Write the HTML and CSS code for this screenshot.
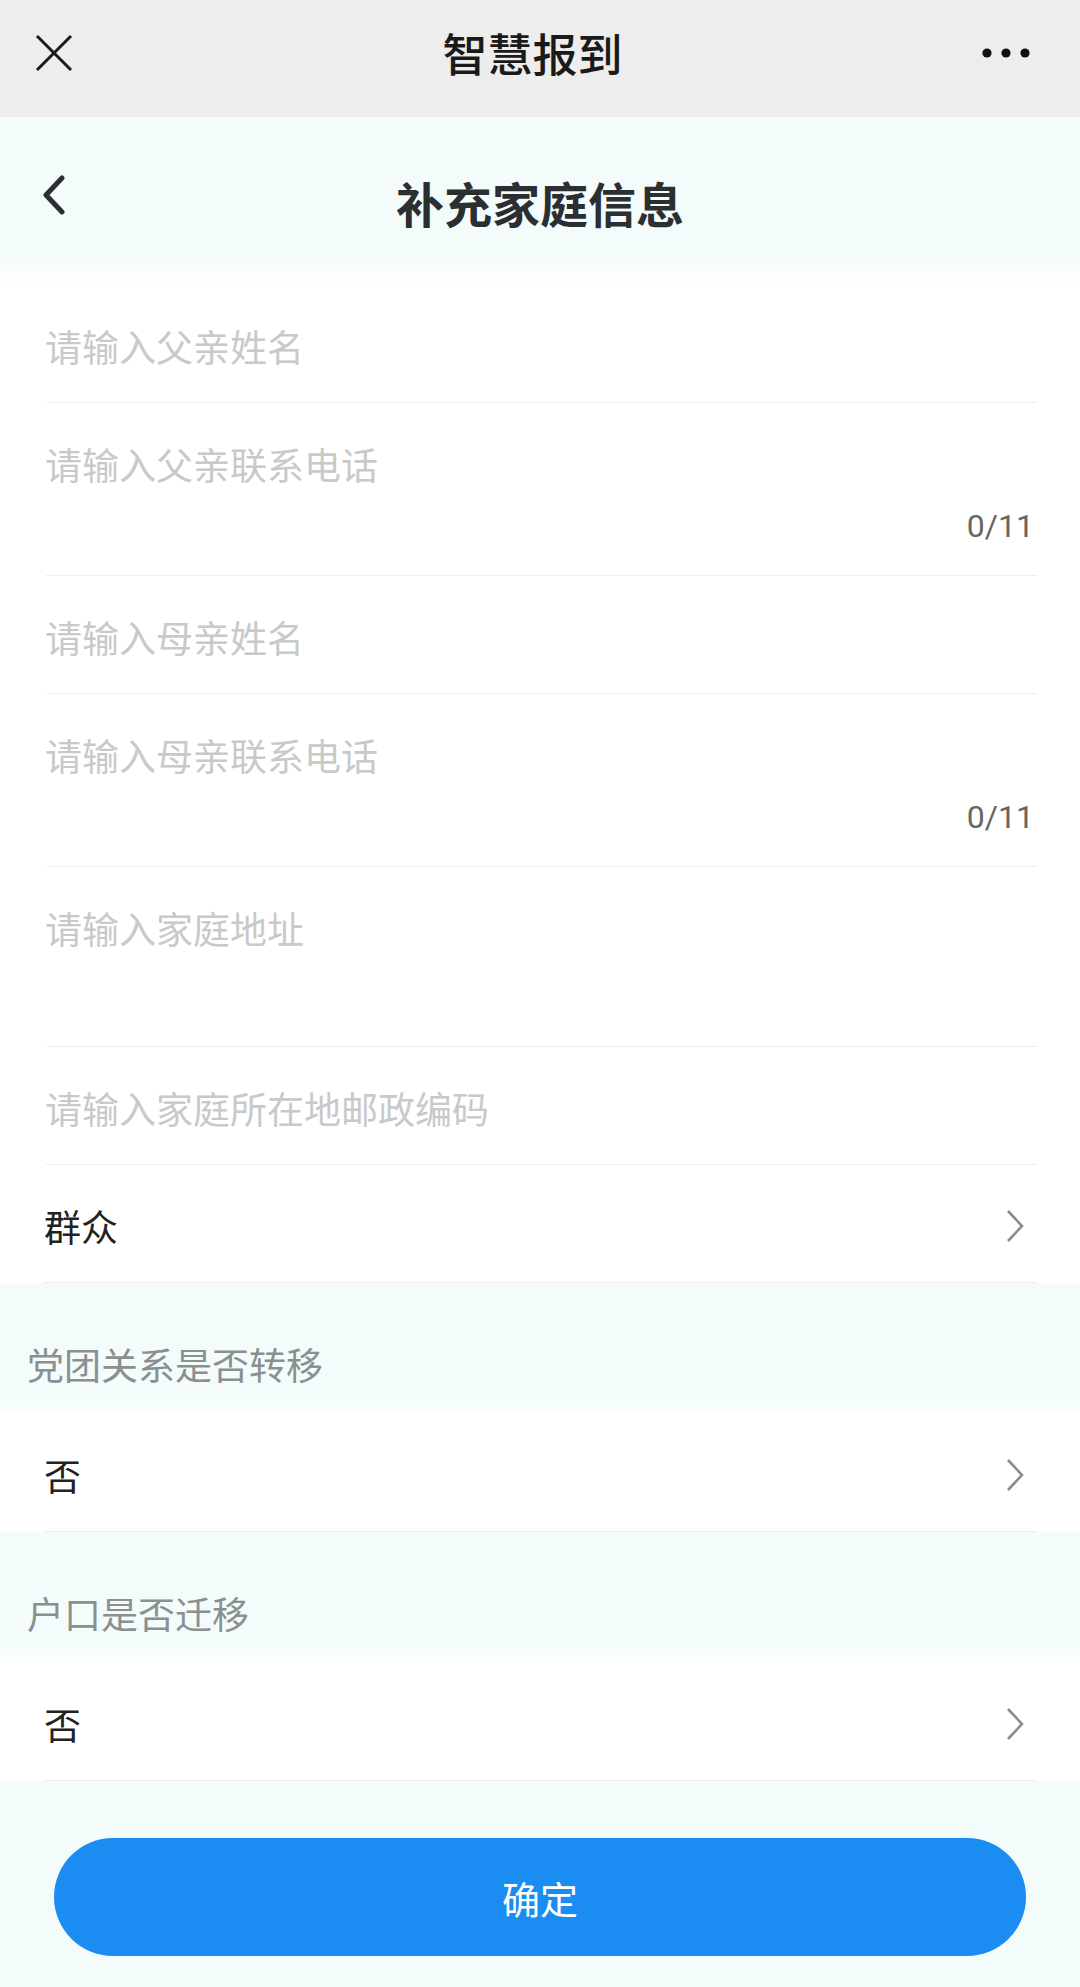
FILE: index.html
```html
<!DOCTYPE html>
<html lang="zh-CN">
<head>
    <meta charset="UTF-8">
    <meta name="viewport" content="width=device-width, initial-scale=1.0">
    <title>智慧报到</title>
    <link rel="stylesheet" href="styles.css">
</head>
<body>
    <div class="topbar">
        <svg class="icon-close" width="38" height="38" viewBox="0 0 38 38">
            <path d="M2 2 L36 36 M36 2 L2 36" stroke="#1a1a1a" stroke-width="3" fill="none"/>
        </svg>
        <div class="topbar-title">智慧报到</div>
        <svg class="icon-more" width="48" height="12" viewBox="0 0 48 12">
            <circle cx="5" cy="6" r="4.6" fill="#111"/>
            <circle cx="24" cy="6" r="4.6" fill="#111"/>
            <circle cx="43" cy="6" r="4.6" fill="#111"/>
        </svg>
    </div>

    <div class="header">
        <svg class="icon-back" width="24" height="40" viewBox="0 0 24 40">
            <path d="M20 3 L4 20 L20 37" stroke="#2b2f31" stroke-width="5" stroke-linecap="round" stroke-linejoin="round" fill="none"/>
        </svg>
        <h1>补充家庭信息</h1>
    </div>

    <div class="form">
        <div class="field">
            <div class="placeholder">请输入父亲姓名</div>
        </div>
        <div class="field">
            <div class="placeholder">请输入父亲联系电话</div>
            <div class="counter">0/11</div>
        </div>
        <div class="field">
            <div class="placeholder">请输入母亲姓名</div>
        </div>
        <div class="field">
            <div class="placeholder">请输入母亲联系电话</div>
            <div class="counter">0/11</div>
        </div>
        <div class="field field-area">
            <div class="placeholder">请输入家庭地址</div>
        </div>
        <div class="field">
            <div class="placeholder">请输入家庭所在地邮政编码</div>
        </div>
        <div class="field picker">
            <div class="value">群众</div>
            <svg class="arrow" width="18" height="34" viewBox="0 0 18 34">
                <path d="M2 2 L16 17 L2 32" stroke="#8c8c8c" stroke-width="2.6" fill="none"/>
            </svg>
        </div>
    </div>

    <div class="section-label">党团关系是否转移</div>
    <div class="form">
        <div class="field picker">
            <div class="value">否</div>
            <svg class="arrow" width="18" height="34" viewBox="0 0 18 34">
                <path d="M2 2 L16 17 L2 32" stroke="#8c8c8c" stroke-width="2.6" fill="none"/>
            </svg>
        </div>
    </div>

    <div class="section-label">户口是否迁移</div>
    <div class="form">
        <div class="field picker">
            <div class="value">否</div>
            <svg class="arrow" width="18" height="34" viewBox="0 0 18 34">
                <path d="M2 2 L16 17 L2 32" stroke="#8c8c8c" stroke-width="2.6" fill="none"/>
            </svg>
        </div>
    </div>

    <div class="actions">
        <button class="btn-ok">确定</button>
    </div>
</body>
</html>
```

FILE: styles.css
```css
* {
    box-sizing: border-box;
}
body {
    margin: 0;
    padding: 0;
    background: #f3fbfb;
    font-family: "Noto Sans CJK SC", "Noto Sans", sans-serif;
    color: #222;
}

/* barra superior do wechat */
.topbar {
    height: 117px;
    background: #ededed;
    display: grid;
    grid-template-columns: 1fr auto 1fr;
    align-items: center;
    padding: 0 50px 12px 35px;
}
.topbar-title {
    font-size: 45px;
    font-weight: 500;
    color: #1a1a1a;
}
.icon-close {
    justify-self: start;
}
.icon-more {
    justify-self: end;
}

.header {
    height: 168px;
    background: linear-gradient(#f3fbfb 82%, #fff);
    display: grid;
    grid-template-columns: 1fr auto 1fr;
    align-items: center;
    padding: 0 42px;
}
.header h1 {
    margin: 0;
    font-size: 48px;
    font-weight: 700;
    color: #2b2f31;
    position: relative;
    top: 1px;
}
.icon-back {
    position: relative;
    top: -6px;
}

.form {
    background: #fff;
}
.field {
    margin: 0 43px 0 46px;
    padding: 34px 0 29px;
    border-bottom: 1px solid #eeeeee;
}
.placeholder {
    font-size: 37px;
    line-height: 54px;
    color: #c9c9c9;
    margin-left: -1px;
}
.counter {
    margin-top: 15px;
    line-height: 40px;
    font-family: Roboto, sans-serif;
    font-size: 32px;
    color: #666;
    text-align: right;
    padding-right: 3px;
}
.field-area {
    height: 180px;
}

.picker {
    display: flex;
    align-items: center;
    justify-content: space-between;
    margin-left: 44px;
}
.value {
    font-size: 37px;
    line-height: 54px;
    color: #222;
}
.arrow {
    margin-right: 13px;
}

.section-label {
    height: 131px;
    padding: 54px 0 0 27px;
    line-height: 54px;
    font-size: 37px;
    color: #8a8f90;
    background: linear-gradient(#f3fbfb 85%, #fafefe);
}

.actions {
    padding: 57px 54px 32px;
}
.btn-ok {
    display: block;
    width: 100%;
    height: 118px;
    border: none;
    border-radius: 59px;
    background: #1b8cf2;
    color: #fff;
    font-family: inherit;
    font-size: 38px;
}
```
